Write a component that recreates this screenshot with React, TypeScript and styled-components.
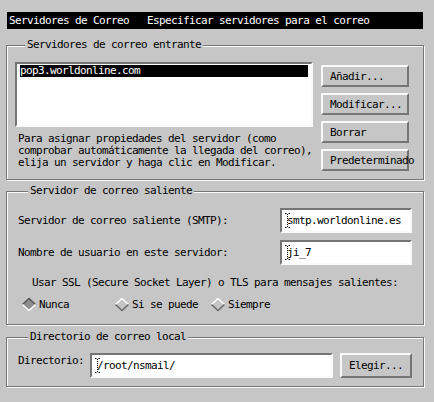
import styled, { createGlobalStyle } from "styled-components";

const BG = "#c6c6c6";
const DARK = "#767676";
const LIGHT = "#fafafa";
const FONT = `"DejaVu Sans Mono", "Liberation Mono", monospace`;

const GlobalStyle = createGlobalStyle`
  html, body {
    margin: 0;
    background: ${BG};
  }
  body {
    font-family: ${FONT};
    font-size: 11px;
    letter-spacing: -0.62px;
    color: #000;
  }
`;

const Dialog = styled.div`
  width: 434px;
  min-height: 402px;
  box-sizing: border-box;
  padding: 12px 10px 0 6px;
`;

const TitleBar = styled.div`
  margin-left: 1px;
  width: 416px;
  height: 17px;
  line-height: 17px;
  box-sizing: border-box;
  padding-left: 2px;
  background: #000;
  color: #fff;
  white-space: pre;
`;

const Group = styled.fieldset<{ $top: number; $pt: number; $pb: number; $pl: number }>`
  display: block;
  margin: ${(p) => p.$top}px 0 0;
  padding: ${(p) => p.$pt}px 11px ${(p) => p.$pb}px ${(p) => p.$pl}px;
  min-width: 0;
  border: 1px solid ${DARK};
  box-shadow: inset 1px 1px 0 ${LIGHT}, 1px 1px 0 ${LIGHT};
`;

const Legend = styled.legend`
  margin-left: 10px;
  padding: 0 2px;
  height: 12px;
  line-height: 12px;
  background: ${BG};
`;

const IncomingBody = styled.div`
  display: grid;
  grid-template-columns: 298px 88px;
  column-gap: 8px;
`;

const ServerList = styled.div`
  height: 65px;
  box-sizing: border-box;
  padding: 1px 3px;
  background: #fff;
  border: 2px solid;
  border-color: ${DARK} ${LIGHT} ${LIGHT} ${DARK};
`;

const ServerItem = styled.div<{ $selected?: boolean }>`
  height: 12px;
  line-height: 12px;
  background: ${(p) => (p.$selected ? "#000" : "transparent")};
  color: ${(p) => (p.$selected ? "#fff" : "#000")};
  white-space: nowrap;
`;

const HelpText = styled.p`
  margin: 6px 0 0 3px;
  line-height: 12px;
  white-space: nowrap;
`;

const ButtonColumn = styled.div`
  display: flex;
  flex-direction: column;
  gap: 6px;
  padding-top: 3px;
`;

const PushButton = styled.button<{ $width?: number; $height?: number; $ml?: number }>`
  flex: none;
  width: ${(p) => p.$width ?? 88}px;
  height: ${(p) => p.$height ?? 22}px;
  box-sizing: border-box;
  padding: 0 0 0 7px;
  margin: 0 0 0 ${(p) => p.$ml ?? 0}px;
  background: ${BG};
  border: 2px solid;
  border-color: ${LIGHT} ${DARK} ${DARK} ${LIGHT};
  font: inherit;
  letter-spacing: inherit;
  color: #000;
  text-align: left;
  white-space: nowrap;
  overflow: visible;
`;

const FieldRow = styled.div<{ $mt?: number }>`
  display: flex;
  align-items: center;
  justify-content: space-between;
  margin-top: ${(p) => p.$mt ?? 0}px;
`;

const FieldLabel = styled.span`
  line-height: 12px;
  white-space: nowrap;
`;

const TextField = styled.div<{ $width: number }>`
  flex: none;
  width: ${(p) => p.$width}px;
  height: 25px;
  box-sizing: border-box;
  display: flex;
  align-items: center;
  padding-left: 3px;
  background: #fff;
  border: 2px solid;
  border-color: ${DARK} ${LIGHT} ${LIGHT} ${DARK};
  white-space: nowrap;
  overflow: hidden;
`;

const CaretMark = styled.svg`
  flex: none;
  width: 5px;
  height: 15px;
  margin-right: -3px;
`;

const Note = styled.div`
  margin-top: 12px;
  line-height: 12px;
  text-align: center;
  white-space: nowrap;
`;

const RadioRow = styled.div`
  display: grid;
  grid-template-columns: 93px 96px auto;
  height: 13px;
  margin-top: 9px;
  padding-left: 4px;
`;

const RadioOption = styled.label`
  display: flex;
  align-items: center;
  gap: 3px;
  line-height: 12px;
  white-space: nowrap;
`;

const DirRow = styled.div`
  display: flex;
  align-items: flex-start;
  height: 26px;
`;

const DirLabel = styled.span`
  padding-top: 2px;
  line-height: 12px;
  margin-right: 6px;
  white-space: nowrap;
`;

const Caret = () => (
  <CaretMark viewBox="0 0 5 15">
    <path d="M0 0.5h1.5M3.5 0.5h1.5M0 14.5h1.5M3.5 14.5h1.5" stroke="#000" strokeWidth="1" />
    <path d="M2.5 1v13" stroke="#000" strokeWidth="1" strokeDasharray="1 1" />
  </CaretMark>
);

const Diamond = ({ on }: { on?: boolean }) => (
  <svg width="14" height="13" viewBox="0 0 14 13">
    <polygon points="7,0.5 13.5,6.5 7,12.5 0.5,6.5" fill={on ? "#8e8e8e" : BG} />
    <polyline
      points="0.5,6.5 7,0.5 13.5,6.5"
      fill="none"
      stroke={on ? "#555" : "#fff"}
      strokeWidth="1.5"
    />
    <polyline
      points="0.5,6.5 7,12.5 13.5,6.5"
      fill="none"
      stroke={on ? "#fff" : "#6a6a6a"}
      strokeWidth="1.5"
    />
  </svg>
);

const App = () => (
  <>
    <GlobalStyle />
    <Dialog>
      <TitleBar>Servidores de Correo   Especificar servidores para el correo</TitleBar>

      <Group $top={10} $pt={11} $pb={8} $pl={8}>
        <Legend>Servidores de correo entrante</Legend>
        <IncomingBody>
          <div>
            <ServerList>
              <ServerItem $selected>pop3.worldonline.com</ServerItem>
            </ServerList>
            <HelpText>
              Para asignar propiedades del servidor (como
              <br />
              comprobar automáticamente la llegada del correo),
              <br />
              elija un servidor y haga clic en Modificar.
            </HelpText>
          </div>
          <ButtonColumn>
            <PushButton>Añadir...</PushButton>
            <PushButton>Modificar...</PushButton>
            <PushButton>Borrar</PushButton>
            <PushButton>Predeterminado</PushButton>
          </ButtonColumn>
        </IncomingBody>
      </Group>

      <Group $top={5} $pt={11} $pb={13} $pl={11}>
        <Legend>Servidor de correo saliente</Legend>
        <FieldRow>
          <FieldLabel>Servidor de correo saliente (SMTP):</FieldLabel>
          <TextField $width={132}>
            <Caret />
            smtp.worldonline.es
          </TextField>
        </FieldRow>
        <FieldRow $mt={7}>
          <FieldLabel>Nombre de usuario en este servidor:</FieldLabel>
          <TextField $width={132}>
            <Caret />
            ji_7
          </TextField>
        </FieldRow>
        <Note>Usar SSL (Secure Socket Layer) o TLS para mensajes salientes:</Note>
        <RadioRow>
          <RadioOption>
            <Diamond on />
            Nunca
          </RadioOption>
          <RadioOption>
            <Diamond />
            Si se puede
          </RadioOption>
          <RadioOption>
            <Diamond />
            Siempre
          </RadioOption>
        </RadioRow>
      </Group>

      <Group $top={6} $pt={10} $pb={7} $pl={11}>
        <Legend>Directorio de correo local</Legend>
        <DirRow>
          <DirLabel>Directorio:</DirLabel>
          <TextField $width={243}>
            <Caret />
            /root/nsmail/
          </TextField>
          <PushButton $width={72} $height={25} $ml={7}>
            Elegir...
          </PushButton>
        </DirRow>
      </Group>
    </Dialog>
  </>
);

export default App;
